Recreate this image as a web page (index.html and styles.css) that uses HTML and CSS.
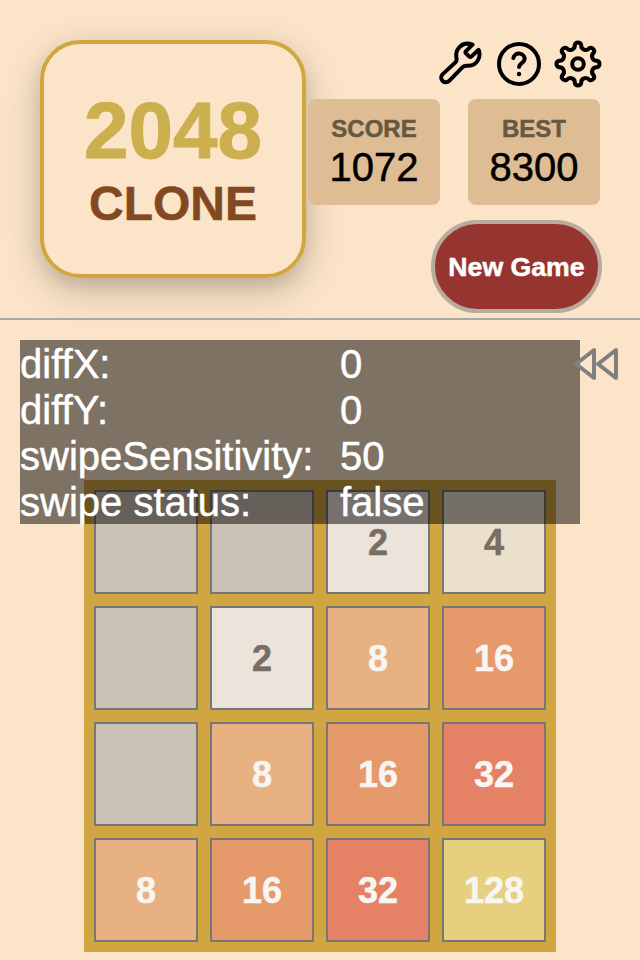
FILE: index.html
```html
<!DOCTYPE html>
<html lang="en">
<head>
<meta charset="utf-8">
<title>2048 Clone</title>
<link rel="stylesheet" href="styles.css">
</head>
<body>
<header class="header">
  <div class="logo">
    <div class="logo-number">2048</div>
    <div class="logo-word">CLONE</div>
  </div>
  <div class="side">
    <nav class="tools">
      <svg class="icon" viewBox="0 0 48 48"><path d="M36.5 4.7 30 11.2Q29 12.3 30 13.4L33 16.4Q34.3 17.6 35.6 16.4L42.6 9.8C45.6 17.5 40.5 26 32.2 25.8Q28.6 25.2 26.6 27.2L13.2 40.8A4.6 4.6 0 0 1 6.5 34.4L19.4 22.4Q21.2 20.6 20.4 17.4C19 9 26.5 .8 36.5 4.7Z"/></svg>
      <svg class="icon" viewBox="0 0 48 48"><circle cx="24" cy="24" r="20"/><path d="M18.3 18A5.8 5.8 0 0 1 29.7 18.8C29.7 22.8 24.5 22.8 24 27"/><circle class="dot" cx="24" cy="34" r="2.2"/></svg>
      <svg class="icon" viewBox="-24 -24 48 48"><path d="M-3.2-19A3.3 3.3 0 0 1 3.2-19A4.5 4.5 0 0 0 11.17-15.7A3.3 3.3 0 0 1 15.7-11.17A4.5 4.5 0 0 0 19-3.2A3.3 3.3 0 0 1 19 3.2A4.5 4.5 0 0 0 15.7 11.17A3.3 3.3 0 0 1 11.17 15.7A4.5 4.5 0 0 0 3.2 19A3.3 3.3 0 0 1-3.2 19A4.5 4.5 0 0 0-11.17 15.7A3.3 3.3 0 0 1-15.7 11.17A4.5 4.5 0 0 0-19 3.2A3.3 3.3 0 0 1-19-3.2A4.5 4.5 0 0 0-15.7-11.17A3.3 3.3 0 0 1-11.17-15.7A4.5 4.5 0 0 0-3.2-19Z"/><circle r="5.8"/></svg>
    </nav>
    <div class="scores">
      <div class="score"><div class="score-label">SCORE</div><div class="score-value">1072</div></div>
      <div class="score"><div class="score-label">BEST</div><div class="score-value">8300</div></div>
    </div>
    <button class="new-game">New Game</button>
  </div>
</header>
<main class="game">
  <dl class="debug">
    <dt>diffX:</dt><dd>0</dd>
    <dt>diffY:</dt><dd>0</dd>
    <dt>swipeSensitivity:</dt><dd>50</dd>
    <dt>swipe status:</dt><dd>false</dd>
  </dl>
  <svg class="undo" viewBox="0 0 48 48"><path d="M24 10V38L6 24ZM46 10V38L28 24Z"/></svg>
  <div class="board">
    <div class="tile"></div><div class="tile"></div><div class="tile t2">2</div><div class="tile t4">4</div>
    <div class="tile"></div><div class="tile t2">2</div><div class="tile t8">8</div><div class="tile t16">16</div>
    <div class="tile"></div><div class="tile t8">8</div><div class="tile t16">16</div><div class="tile t32">32</div>
    <div class="tile t8">8</div><div class="tile t16">16</div><div class="tile t32">32</div><div class="tile t128">128</div>
  </div>
</main>
</body>
</html>
```
FILE: styles.css
```css
* { box-sizing: border-box; }

body {
  margin: 0;
  background: #fbe4c8;
  font-family: "Liberation Sans", Arial, sans-serif;
  font-size: 40px;
  line-height: 46px;
  color: #000;
  -webkit-text-stroke: 0.5px currentColor;
}

.header {
  display: flex;
  height: 320px;
  padding: 40px 38px 0 40px;
  border-bottom: 2px solid #a9a9a9;
}

.logo {
  width: 266px;
  height: 238px;
  flex: none;
  padding-top: 41px;
  border: 4px solid #d1a640;
  border-radius: 40px;
  box-shadow: 0 8px 16px rgba(0, 0, 0, 0.1), 0 12px 40px rgba(0, 0, 0, 0.19);
  text-align: center;
  font-weight: bold;
}

.logo-number {
  font-size: 80px;
  line-height: 92px;
  color: #ccaf4e;
  -webkit-text-stroke-width: 1px;
}

.logo-word {
  font-size: 48px;
  line-height: 54px;
  color: #82481f;
}

.side {
  flex: 1;
  display: flex;
  flex-direction: column;
  align-items: flex-end;
}

.tools {
  display: flex;
  gap: 11px;
  height: 59px;
}

.icon {
  width: 48px;
  height: 48px;
  fill: none;
  stroke: #000;
  stroke-width: 4;
  stroke-linecap: round;
  stroke-linejoin: round;
}

.icon .dot {
  fill: #000;
  stroke: none;
}

.scores {
  display: flex;
  gap: 28px;
  margin-right: 2px;
}

.score {
  width: 132px;
  height: 106px;
  padding-top: 16px;
  border-radius: 8px;
  background: #debd94;
  text-align: center;
}

.score-label {
  font-size: 24px;
  font-weight: bold;
  line-height: 28px;
  color: #685842;
}

.score-value { padding-top: 1px; }

.new-game {
  width: 171px;
  height: 93px;
  margin-top: 15px;
  padding: 2px 0 0;
  border: 4px solid #b8aa9c;
  border-radius: 47px;
  background: #963430;
  color: #fff;
  font: bold 26.667px "Liberation Sans", Arial, sans-serif;
  -webkit-text-stroke: 0.5px #fff;
}

.game {
  position: relative;
  padding-top: 160px;
}

.debug {
  position: absolute;
  z-index: 1;
  top: 20px;
  left: 20px;
  display: grid;
  grid-template-columns: 320px 240px;
  height: 184px;
  margin: 0;
  padding-top: 1px;
  grid-auto-rows: 46px;
  background: rgba(0, 0, 0, 0.5);
  color: #fff;
}

.debug dd { margin: 0; }

.undo {
  position: absolute;
  z-index: 2;
  top: 20px;
  right: 22px;
  width: 48px;
  height: 48px;
  fill: none;
  stroke: #808080;
  stroke-width: 4;
  stroke-linejoin: round;
}

.board {
  display: grid;
  grid-template-columns: repeat(4, 104px);
  grid-auto-rows: 104px;
  gap: 12px;
  width: 472px;
  height: 472px;
  margin: 0 auto;
  padding: 10px;
  background: #d1a640;
}

.tile {
  display: flex;
  align-items: center;
  justify-content: center;
  padding-top: 2px;
  border: 2px solid #777;
  background: #ccc1b5;
  color: #f8f6f2;
  font-size: 36px;
  font-weight: bold;
}

.t2 { background: #ece3da; color: #776e65; }
.t4 { background: #eae0cb; color: #776e65; }
.t8 { background: #e8b181; }
.t16 { background: #e6996b; }
.t32 { background: #e58266; }
.t128 { background: #e6cf7f; }
```
